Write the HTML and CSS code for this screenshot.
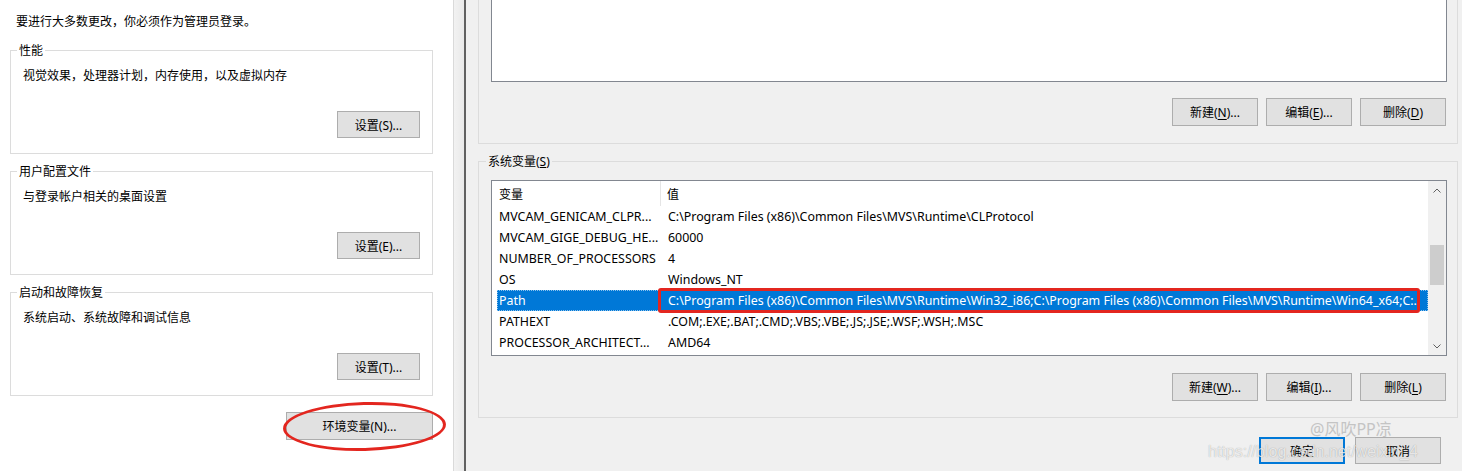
FILE: index.html
```html
<!DOCTYPE html>
<html lang="zh-CN">
<head>
  <meta charset="UTF-8">
  <title>系统属性 - 环境变量</title>
  <link rel="stylesheet" href="styles.css">
</head>
<body>
  <div class="screen">
    <div class="left-pane">
      <p class="intro">要进行大多数更改，你必须作为管理员登录。</p>

      <fieldset class="group">
        <legend>性能</legend>
        <p class="desc">视觉效果，处理器计划，内存使用，以及虚拟内存</p>
        <div class="group-actions"><button class="btn">设置(S)...</button></div>
      </fieldset>

      <fieldset class="group">
        <legend>用户配置文件</legend>
        <p class="desc">与登录帐户相关的桌面设置</p>
        <div class="group-actions"><button class="btn">设置(E)...</button></div>
      </fieldset>

      <fieldset class="group">
        <legend>启动和故障恢复</legend>
        <p class="desc">系统启动、系统故障和调试信息</p>
        <div class="group-actions"><button class="btn">设置(T)...</button></div>
      </fieldset>

      <div class="env-row">
        <button class="btn btn-env">环境变量(N)...</button>
        <span class="mark-ellipse"></span>
      </div>
    </div>

    <div class="splitter"></div>

    <div class="right-pane">
      <div class="user-group">
        <div class="listbox listbox-empty"></div>
        <div class="btn-row">
          <button class="btn btn-wide">新建(<u>N</u>)...</button>
          <button class="btn btn-wide">编辑(<u>E</u>)...</button>
          <button class="btn btn-wide">删除(<u>D</u>)</button>
        </div>
      </div>

      <fieldset class="sys-group">
        <legend>系统变量(<u>S</u>)</legend>
        <div class="listbox var-table">
          <div class="var-list">
            <div class="var-head">
              <span class="head-name">变量</span>
              <span class="head-value">值</span>
            </div>
            <div class="var-row">
              <span class="var-name">MVCAM_GENICAM_CLPR...</span>
              <span class="var-value">C:\Program Files (x86)\Common Files\MVS\Runtime\CLProtocol</span>
            </div>
            <div class="var-row">
              <span class="var-name">MVCAM_GIGE_DEBUG_HE...</span>
              <span class="var-value">60000</span>
            </div>
            <div class="var-row">
              <span class="var-name">NUMBER_OF_PROCESSORS</span>
              <span class="var-value">4</span>
            </div>
            <div class="var-row">
              <span class="var-name">OS</span>
              <span class="var-value">Windows_NT</span>
            </div>
            <div class="var-row selected">
              <span class="var-name">Path</span>
              <span class="var-value">C:\Program Files (x86)\Common Files\MVS\Runtime\Win32_i86;C:\Program Files (x86)\Common Files\MVS\Runtime\Win64_x64;C:..</span>
              <span class="callout"></span>
            </div>
            <div class="var-row">
              <span class="var-name">PATHEXT</span>
              <span class="var-value">.COM;.EXE;.BAT;.CMD;.VBS;.VBE;.JS;.JSE;.WSF;.WSH;.MSC</span>
            </div>
            <div class="var-row">
              <span class="var-name">PROCESSOR_ARCHITECT...</span>
              <span class="var-value">AMD64</span>
            </div>
          </div>
          <div class="scrollbar">
            <div class="sb-arrow">
              <svg width="8" height="5" viewBox="0 0 8 5"><polyline points="0.5,4.5 4,1 7.5,4.5" fill="none" stroke="#606060" stroke-width="1"/></svg>
            </div>
            <div class="sb-track"><div class="sb-thumb"></div></div>
            <div class="sb-arrow">
              <svg width="8" height="5" viewBox="0 0 8 5"><polyline points="0.5,0.5 4,4 7.5,0.5" fill="none" stroke="#606060" stroke-width="1"/></svg>
            </div>
          </div>
        </div>
        <div class="btn-row">
          <button class="btn btn-wide">新建(<u>W</u>)...</button>
          <button class="btn btn-wide">编辑(<u>I</u>)...</button>
          <button class="btn btn-wide">删除(<u>L</u>)</button>
        </div>
      </fieldset>

      <div class="dialog-actions">
        <button class="btn btn-wide btn-default">确定</button>
        <button class="btn btn-wide">取消</button>
      </div>

      <div class="watermark-name">@风吹PP凉</div>
      <div class="watermark-url">https://blog.csdn.net/weixin_4</div>
    </div>
  </div>
</body>
</html>
```

FILE: styles.css
```css
* {
  box-sizing: border-box;
}

body {
  margin: 0;
  width: 1462px;
  height: 471px;
  overflow: hidden;
  font-family: "Noto Sans", "Noto Sans CJK SC", sans-serif;
  font-size: 12px;
  color: #000;
  background: #f0f0f0;
}

.screen {
  display: flex;
  height: 471px;
}

/* left: system properties, advanced tab */
.left-pane {
  position: relative;
  width: 454px;
  flex: none;
  background: #fff;
  border-right: 1px solid #dadada;
  padding: 14px 20px 0 10px;
}

.intro {
  margin: 0 0 12px 6px;
  line-height: 16px;
}

.group {
  margin: 0 0 9px;
  padding: 9px 12px 15px;
  border: 1px solid #dcdcdc;
  min-width: 0;
}

.group legend {
  margin-left: -6px;
  padding: 1px 2px 0;
  line-height: 15px;
}

.desc {
  margin: 0;
  padding-top: 1px;
  line-height: 16px;
}

.group-actions {
  display: flex;
  justify-content: flex-end;
  margin-top: 27px;
}

.btn {
  font: inherit;
  color: #000;
  height: 27px;
  min-width: 83px;
  padding: 0 8px;
  background: #e1e1e1;
  border: 1px solid #adadad;
  border-radius: 0;
}

.btn u {
  text-underline-offset: 2px;
}

.env-row {
  position: relative;
  display: flex;
  justify-content: flex-end;
  margin-top: 16px;
}

.btn-env {
  width: 147px;
  height: 28px;
}

.mark-ellipse {
  position: absolute;
  right: -13px;
  top: -10px;
  width: 163px;
  height: 49px;
  border: 3px solid #e3261f;
  border-radius: 50%;
  transform: rotate(-1.5deg);
}

.splitter {
  width: 12px;
  flex: none;
  background: linear-gradient(to right, #f2f2f2, #e9e9e9);
  border-right: 2px solid #606060;
}

/* right: environment variables dialog */
.right-pane {
  position: relative;
  flex: 1;
  padding: 0 4px 0 12px;
}

.user-group {
  border: 1px solid #dcdcdc;
  border-top: none;
  padding: 0 10px 17px 12px;
}

.listbox {
  background: #fff;
  border: 1px solid #828790;
}

.listbox-empty {
  height: 82px;
  border-top: none;
}

.btn-row {
  display: flex;
  justify-content: flex-end;
  gap: 8px;
  margin: 16px 1px 0 0;
}

.btn-wide {
  width: 86px;
  height: 28px;
}

.sys-group {
  margin: 9px 0 0;
  padding: 11px 10px 16px 12px;
  border: 1px solid #dcdcdc;
  min-width: 0;
}

.sys-group legend {
  margin-left: -5px;
  padding: 1px 2px 0;
  line-height: 15px;
}

.sys-group .btn-row {
  margin-top: 17px;
}

.var-table {
  display: flex;
  height: 176px;
  overflow: hidden;
}

.var-list {
  flex: 1;
  min-width: 0;
  padding-left: 5px;
  font-size: 12.4px;
}

.var-head {
  display: flex;
  height: 25px;
  font-size: 12px;
}

.head-name {
  width: 164px;
  padding-left: 2px;
  display: flex;
  align-items: center;
  border-right: 1px solid #e5e5e5;
}

.head-value {
  padding-left: 6px;
  display: flex;
  align-items: center;
}

.var-row {
  position: relative;
  display: flex;
  align-items: center;
  height: 21px;
  white-space: nowrap;
}

.var-name {
  width: 166px;
  flex: none;
  padding-left: 2px;
  overflow: hidden;
}

.var-value {
  flex: 1;
  min-width: 0;
  padding-left: 5px;
  overflow: hidden;
}

.var-row.selected {
  background: #0078d7;
  color: #fff;
  outline: 1px dotted rgba(255, 255, 255, 0.55);
  outline-offset: -1px;
}

.callout {
  position: absolute;
  left: 161px;
  right: 8px;
  top: -2px;
  bottom: -2px;
  border: 3px solid #e3261f;
  border-radius: 3px;
}

.scrollbar {
  width: 18px;
  flex: none;
  display: flex;
  flex-direction: column;
  background: #f0f0f0;
}

.sb-arrow {
  height: 18px;
  display: flex;
  align-items: center;
  justify-content: center;
}

.sb-track {
  flex: 1;
  padding: 46px 2px 0;
}

.sb-thumb {
  height: 40px;
  background: #cdcdcd;
}

.dialog-actions {
  display: flex;
  justify-content: flex-end;
  gap: 10px;
  margin: 19px 17px 0 0;
}

.dialog-actions .btn {
  height: 27px;
}

.btn-default {
  border: 2px solid #0078d7;
}

.watermark-name {
  position: absolute;
  left: 844px;
  top: 416px;
  font-size: 16px;
  color: #c4c4c4;
}

.watermark-url {
  position: absolute;
  left: 742px;
  top: 443px;
  font-family: "Liberation Sans", sans-serif;
  font-size: 16px;
  line-height: 18px;
  color: rgba(255, 255, 255, 0.75);
  text-shadow: 0 0 1px rgba(0, 0, 0, 0.35);
  white-space: nowrap;
}
```
